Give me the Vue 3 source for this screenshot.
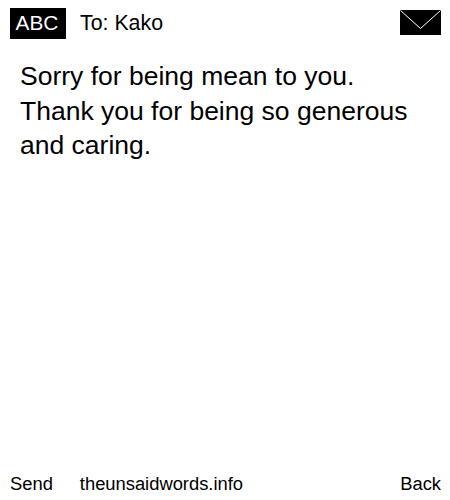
<script setup>
const lines = [
  'Sorry for being mean to you.',
  'Thank you for being so generous',
  'and caring.'
]
</script>

<template>
  <div class="phone">
    <header class="top-bar">
      <span class="mode">ABC</span>
      <span class="to">To: Kako</span>
      <svg class="envelope" width="41" height="25" viewBox="0 0 41 25">
        <rect width="41" height="25" fill="#000" />
        <path d="M0.5 0.5 L20.5 18.5 L40.5 0.5" fill="none" stroke="#fff" stroke-width="1" />
      </svg>
    </header>
    <main class="message">
      <div v-for="line in lines" :key="line">{{ line }}</div>
    </main>
    <footer class="bottom-bar">
      <span class="send">Send</span>
      <span class="site">theunsaidwords.info</span>
      <span class="back">Back</span>
    </footer>
  </div>
</template>

<style scoped>
.phone {
  width: 450px;
  height: 500px;
  display: flex;
  flex-direction: column;
  background: #fff;
  color: #000;
  font-family: "Liberation Sans", Arial, sans-serif;
}

.top-bar {
  display: flex;
  align-items: center;
  padding: 8px 9px 0 10px;
  height: 31px;
}

.mode {
  width: 56px;
  height: 31px;
  line-height: 30px;
  padding-right: 2px;
  box-sizing: border-box;
  background: #000;
  color: #fff;
  font-size: 20.8px;
  text-align: center;
}

.to {
  margin-left: 14px;
  font-size: 21.33px;
}

.envelope {
  margin-left: auto;
  margin-top: -3px;
}

.message {
  flex: 1;
  padding: 20px 20px 0;
  font-size: 26.5px;
  line-height: 34.5px;
}

.bottom-bar {
  display: flex;
  align-items: center;
  padding: 0 9px 4px 10px;
  font-size: 18.35px;
  line-height: 24px;
}

.site {
  margin-left: 27px;
}

.back {
  margin-left: auto;
}
</style>
